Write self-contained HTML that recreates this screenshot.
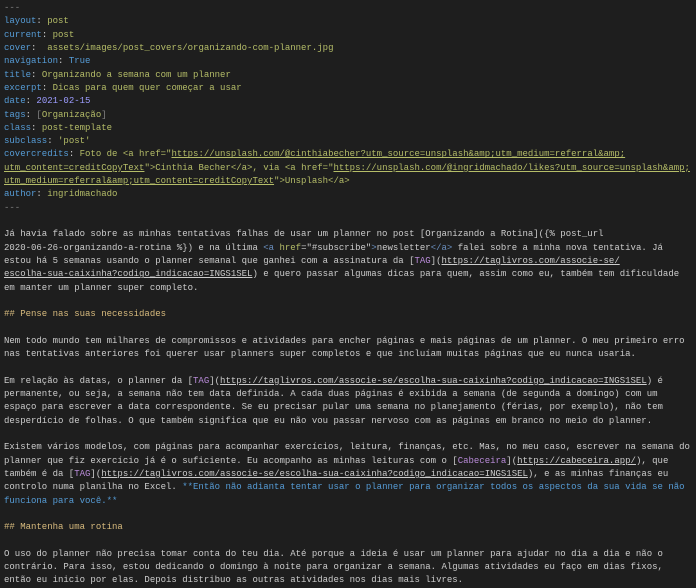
<!DOCTYPE html>
<html><head><meta charset="utf-8"><style>
html,body{margin:0;padding:0;background:#1e1e1e;width:696px;height:588px;overflow:hidden}
pre{margin:0;padding:2px 0 0 4px;font-family:"Liberation Mono",monospace;font-size:9px;line-height:13.32px;color:#cccccc;white-space:pre}
.k{color:#569cd6}.v{color:#b5bd68}.d{color:#9d9dff}.h{color:#d7ba7d}.t{color:#b98bd9}.b{color:#569cd6}.g{color:#808080}.u{text-decoration:underline}.tg{color:#6a8fbf}
</style></head><body><pre><span class="g">---</span>
<span class="k">layout</span>: <span class="v">post</span>
<span class="k">current</span>: <span class="v">post</span>
<span class="k">cover</span>:  <span class="v">assets/images/post_covers/organizando-com-planner.jpg</span>
<span class="k">navigation</span>: <span class="k">True</span>
<span class="k">title</span>: <span class="v">Organizando a semana com um planner</span>
<span class="k">excerpt</span>: <span class="v">Dicas para quem quer começar a usar</span>
<span class="k">date</span>: <span class="d">2021-02-15</span>
<span class="k">tags</span>: <span class="g">[</span><span class="v">Organização</span><span class="g">]</span>
<span class="k">class</span>: <span class="v">post-template</span>
<span class="k">subclass</span>: <span class="v">'post'</span>
<span class="k">covercredits</span>: <span class="v">Foto de &lt;a href="<span class="u">https://unsplash.com/@cinthiabecher?utm_source=unsplash&amp;amp;utm_medium=referral&amp;amp;</span></span>
<span class="v"><span class="u">utm_content=creditCopyText</span>"&gt;Cinthia Becher&lt;/a&gt;, via &lt;a href="<span class="u">https://unsplash.com/@ingridmachado/likes?utm_source=unsplash&amp;amp;</span></span>
<span class="v"><span class="u">utm_medium=referral&amp;amp;utm_content=creditCopyText</span>"&gt;Unsplash&lt;/a&gt;</span>
<span class="k">author</span>: <span class="v">ingridmachado</span>
<span class="g">---</span>

Já havia falado sobre as minhas tentativas falhas de usar um planner no post [Organizando a Rotina]({% post_url
2020-06-26-organizando-a-rotina %}) e na última <span class="tg">&lt;a</span> <span class="v">href</span>="#subscribe"<span class="tg">&gt;</span>newsletter<span class="tg">&lt;/a&gt;</span> falei sobre a minha nova tentativa. Já
estou há 5 semanas usando o planner semanal que ganhei com a assinatura da [<span class="t">TAG</span>](<span class="u">https://taglivros.com/associe-se/</span>
<span class="u">escolha-sua-caixinha?codigo_indicacao=INGS1SEL</span>) e quero passar algumas dicas para quem, assim como eu, também tem dificuldade
em manter um planner super completo.

<span class="h">## Pense nas suas necessidades</span>

Nem todo mundo tem milhares de compromissos e atividades para encher páginas e mais páginas de um planner. O meu primeiro erro
nas tentativas anteriores foi querer usar planners super completos e que incluíam muitas páginas que eu nunca usaria.

Em relação às datas, o planner da [<span class="t">TAG</span>](<span class="u">https://taglivros.com/associe-se/escolha-sua-caixinha?codigo_indicacao=INGS1SEL</span>) é
permanente, ou seja, a semana não tem data definida. A cada duas páginas é exibida a semana (de segunda a domingo) com um
espaço para escrever a data correspondente. Se eu precisar pular uma semana no planejamento (férias, por exemplo), não tem
desperdício de folhas. O que também significa que eu não vou passar nervoso com as páginas em branco no meio do planner.

Existem vários modelos, com páginas para acompanhar exercícios, leitura, finanças, etc. Mas, no meu caso, escrever na semana do
planner que fiz exercício já é o suficiente. Eu acompanho as minhas leituras com o [<span class="t">Cabeceira</span>](<span class="u">https://cabeceira.app/</span>), que
também é da [<span class="t">TAG</span>](<span class="u">https://taglivros.com/associe-se/escolha-sua-caixinha?codigo_indicacao=INGS1SEL</span>), e as minhas finanças eu
controlo numa planilha no Excel. <span class="b">**Então não adianta tentar usar o planner para organizar todos os aspectos da sua vida se não</span>
<span class="b">funciona para você.**</span>

<span class="h">## Mantenha uma rotina</span>

O uso do planner não precisa tomar conta do teu dia. Até porque a ideia é usar um planner para ajudar no dia a dia e não o
contrário. Para isso, estou dedicando o domingo à noite para organizar a semana. Algumas atividades eu faço em dias fixos,
então eu inicio por elas. Depois distribuo as outras atividades nos dias mais livres.
</pre></body></html>
